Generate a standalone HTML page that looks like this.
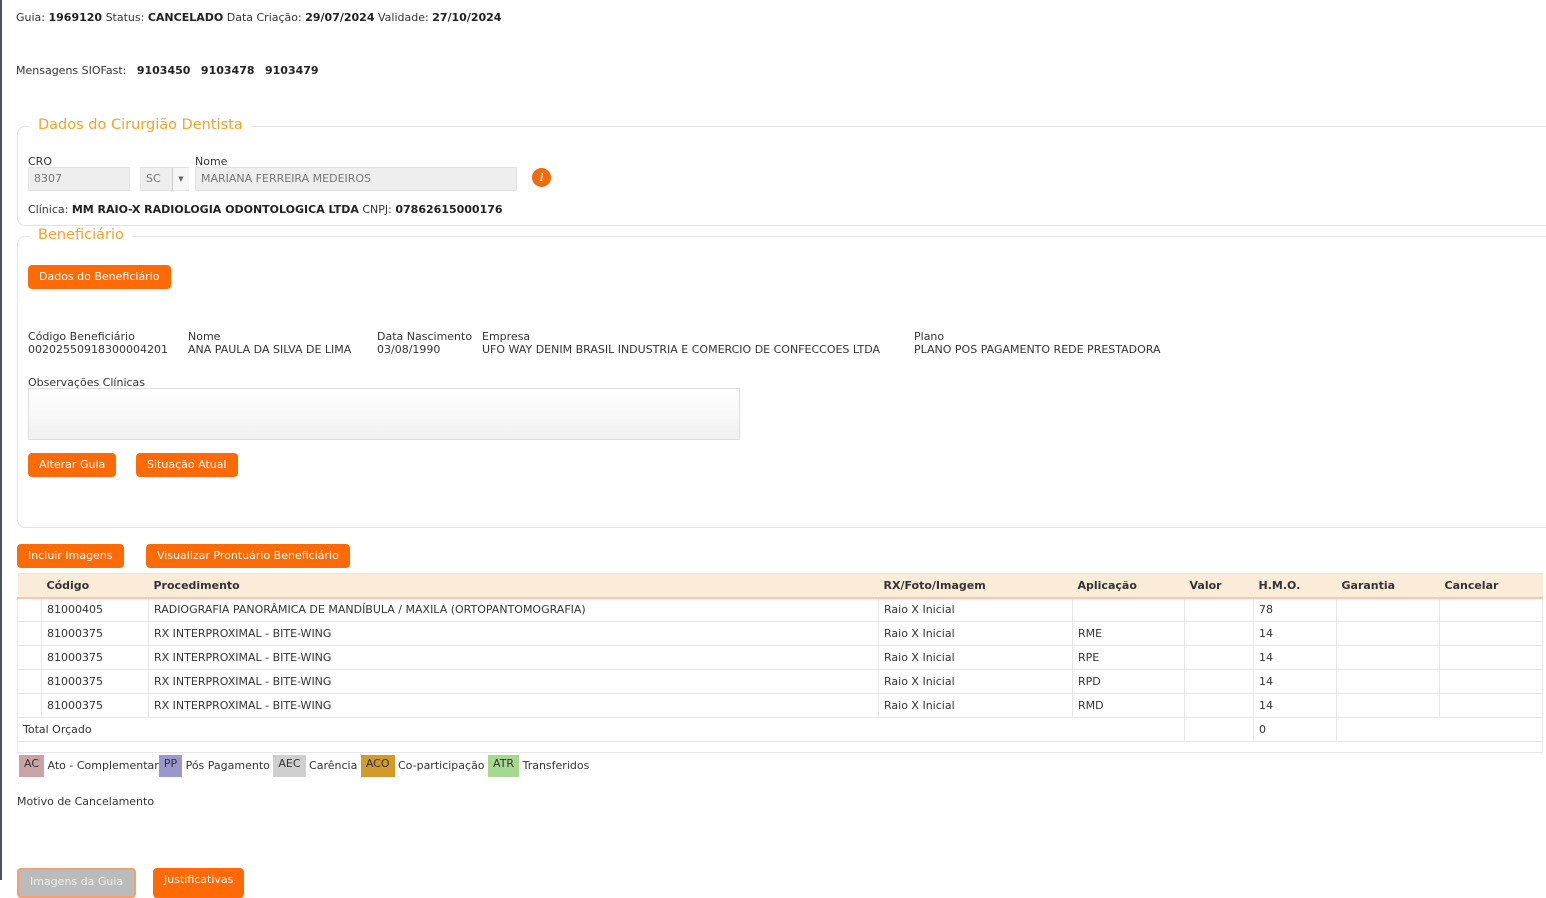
<!DOCTYPE html>
<html><head><meta charset="utf-8"><style>
*{box-sizing:border-box;margin:0;padding:0}
body{width:1546px;height:880px;overflow:hidden;background:#fff;font-family:"DejaVu Sans",Verdana,sans-serif;font-size:11px;color:#333;position:relative}
.a{position:absolute;white-space:nowrap}
b{color:#222}
.fs{position:absolute;border:1px solid #e3e3e3;border-radius:8px;border-right:none;border-top-right-radius:0;border-bottom-right-radius:0}
.lg{position:absolute;background:#fff;color:#f4a22a;font-size:14.5px;padding:0 8px}
.btn{position:absolute;background:#fd6a06;color:#fff;border-radius:4px;height:24px;line-height:24px;padding:0 11px;font-size:11px;white-space:nowrap}
.inp{position:absolute;background:#eee;border:1px solid #e2e2e2;color:#777;height:24px;line-height:22px;padding-left:5px}
table{position:absolute;left:17px;top:573px;width:1526px;border-collapse:collapse}
td,th{height:24px;border:1px solid #e6e6e6;padding:0 5px;text-align:left;font-size:11px;white-space:nowrap}
th{background:#fbebd9;font-weight:bold;color:#333;border-bottom:2px solid #f7c9a8;border-left:none;border-right:none}
.tg{display:inline-block;height:22px;line-height:18px;padding:0 5px;vertical-align:middle}
</style></head><body>
<div class="a" style="left:0;top:0;width:2px;height:880px;background:#4a5560"></div>
<div class="a" style="left:16px;top:11px">Guia: <b>1969120</b> Status: <b>CANCELADO</b> Data Criação: <b>29/07/2024</b> Validade: <b>27/10/2024</b></div>
<div class="a" style="left:16px;top:64px">Mensagens SIOFast: &nbsp;&nbsp;<b>9103450</b> &nbsp;&nbsp;<b>9103478</b> &nbsp;&nbsp;<b>9103479</b></div>

<div class="fs" style="left:17px;top:126px;width:1529px;height:100px"></div>
<div class="lg" style="left:30px;top:117px">Dados do Cirurgião Dentista</div>
<div class="a" style="left:28px;top:155px">CRO</div>
<div class="a" style="left:195px;top:155px">Nome</div>
<div class="inp" style="left:28px;top:167px;width:102px">8307</div>
<div class="inp" style="left:140px;top:167px;width:49px">SC<span style="position:absolute;left:31px;top:0;width:17px;height:22px;border-left:1px solid #ccc;background:#f6f6f6;font-size:7px;text-align:center;color:#666">▼</span></div>
<div class="inp" style="left:195px;top:167px;width:322px">MARIANA FERREIRA MEDEIROS</div>
<div class="a" style="left:532px;top:168px;width:19px;height:19px;border-radius:50%;background:#f36a0a;color:#fff;font:italic bold 12px 'Liberation Serif',serif;text-align:center;line-height:19px">i</div>
<div class="a" style="left:28px;top:203px">Clínica: <b>MM RAIO-X RADIOLOGIA ODONTOLOGICA LTDA</b> CNPJ: <b>07862615000176</b></div>

<div class="fs" style="left:17px;top:236px;width:1529px;height:292px"></div>
<div class="lg" style="left:30px;top:227px">Beneficiário</div>
<div class="btn" style="left:28px;top:265px">Dados do Beneficiário</div>
<div class="a" style="left:28px;top:330px">Código Beneficiário<br>00202550918300004201</div>
<div class="a" style="left:188px;top:330px">Nome<br>ANA PAULA DA SILVA DE LIMA</div>
<div class="a" style="left:377px;top:330px">Data Nascimento<br>03/08/1990</div>
<div class="a" style="left:482px;top:330px">Empresa<br>UFO WAY DENIM BRASIL INDUSTRIA E COMERCIO DE CONFECCOES LTDA</div>
<div class="a" style="left:914px;top:330px">Plano<br>PLANO POS PAGAMENTO REDE PRESTADORA</div>
<div class="a" style="left:28px;top:376px">Observações Clínicas</div>
<div class="a" style="left:28px;top:388px;width:712px;height:52px;border:1px solid #ddd;background:linear-gradient(#fff,#f1f1f1)"></div>
<div class="btn" style="left:28px;top:453px">Alterar Guia</div>
<div class="btn" style="left:136px;top:453px">Situação Atual</div>

<div class="btn" style="left:17px;top:544px">Incluir Imagens</div>
<div class="btn" style="left:146px;top:544px">Visualizar Prontuário Beneficiário</div>

<table>
<tr><th style="width:24px"></th><th style="width:107px">Código</th><th style="width:730px">Procedimento</th><th style="width:194px">RX/Foto/Imagem</th><th style="width:112px">Aplicação</th><th style="width:69px">Valor</th><th style="width:83px">H.M.O.</th><th style="width:103px">Garantia</th><th>Cancelar</th></tr>
<tr><td></td><td>81000405</td><td>RADIOGRAFIA PANORÂMICA DE MANDÍBULA / MAXILA (ORTOPANTOMOGRAFIA)</td><td>Raio X Inicial</td><td></td><td></td><td>78</td><td></td><td></td></tr>
<tr><td></td><td>81000375</td><td>RX INTERPROXIMAL - BITE-WING</td><td>Raio X Inicial</td><td>RME</td><td></td><td>14</td><td></td><td></td></tr>
<tr><td></td><td>81000375</td><td>RX INTERPROXIMAL - BITE-WING</td><td>Raio X Inicial</td><td>RPE</td><td></td><td>14</td><td></td><td></td></tr>
<tr><td></td><td>81000375</td><td>RX INTERPROXIMAL - BITE-WING</td><td>Raio X Inicial</td><td>RPD</td><td></td><td>14</td><td></td><td></td></tr>
<tr><td></td><td>81000375</td><td>RX INTERPROXIMAL - BITE-WING</td><td>Raio X Inicial</td><td>RMD</td><td></td><td>14</td><td></td><td></td></tr>
<tr><td colspan="5">Total Orçado</td><td></td><td>0</td><td colspan="2"></td></tr>
<tr><td colspan="9" style="height:11px"></td></tr>
</table>

<div class="a" style="left:19px;top:755px"><span class="tg" style="background:#c9a3a6">AC</span> Ato - Complementar<span class="tg" style="background:#9898cc">PP</span> Pós Pagamento <span class="tg" style="background:#cfcfcf">AEC</span> Carência <span class="tg" style="background:#d29a2a">ACO</span> Co-participação <span class="tg" style="background:#a7d88f">ATR</span> Transferidos</div>
<div class="a" style="left:17px;top:795px">Motivo de Cancelamento</div>
<div class="btn" style="left:17px;top:868px;height:30px;background:#bbb;border:2px solid #f4a070;color:#eee">Imagens da Guia</div>
<div class="btn" style="left:153px;top:868px;height:30px">Justificativas</div>
</body></html>
